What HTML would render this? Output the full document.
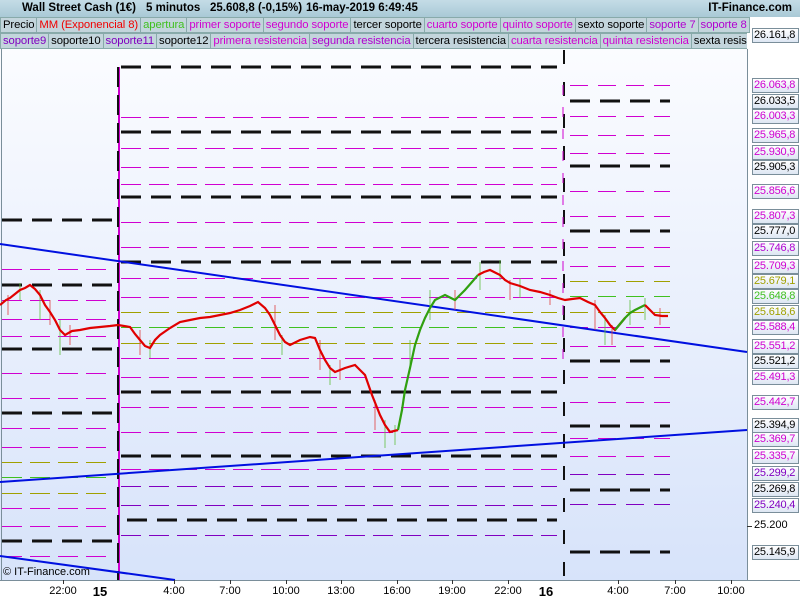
<!DOCTYPE html>
<html><head><meta charset="utf-8"><style>
body{margin:0;width:800px;height:600px;overflow:hidden;background:#fff;font-family:"Liberation Sans",sans-serif;position:relative}
#hdr{position:absolute;left:0;top:0;width:800px;height:17px;background:linear-gradient(#c4dce6,#a9c9d6);font-size:11.5px;font-weight:bold;line-height:17px}
#hdr span{position:absolute;white-space:nowrap}
.row{position:absolute;left:0;height:16px;white-space:nowrap;font-size:11.3px;line-height:14px;letter-spacing:-0.1px}
.row span{display:inline-block;background:#c3d5dc;border:1px solid #8aa;padding:0 2px;margin-right:-1px;height:14px}
.lab{position:absolute;left:752px;width:44px;height:13px;border:1px solid #7a8e9a;background:linear-gradient(#fff,#dde6f3);font-size:11px;line-height:13px;text-align:left;padding-left:1px;letter-spacing:-0.2px}
.t{position:absolute;top:585px;font-size:11px;transform:translateX(-50%)}
</style></head><body>
<svg width="800" height="600" style="position:absolute;left:0;top:0" shape-rendering="crispEdges">
<defs><linearGradient id="g" x1="0" y1="0" x2="0" y2="1"><stop offset="0" stop-color="#fbfcff"/><stop offset="1" stop-color="#d7e3fa"/></linearGradient></defs>
<rect x="0" y="49" width="747" height="531" fill="url(#g)"/>
<line x1="747.5" y1="49" x2="747.5" y2="580" stroke="#7a8e9a"/>
<line x1="0" y1="580.5" x2="800" y2="580.5" stroke="#7a8e9a"/>
<line x1="1.5" y1="49" x2="1.5" y2="580" stroke="#7a8e9a"/>
<g stroke-width="1" fill="none">
<g stroke="#d000d0" stroke-dasharray="20,8">
<path d="M2 269.5H112M2 300.5H112M2 319.5H112M2 336.5H112M2 373.5H112M2 398.5H112M2 428.5H112M2 447.5H112M2 508.5H112M2 526.5H112M2 556.5H112"/></g>
<g stroke="#a0a000" stroke-dasharray="20,8"><path d="M2 462.5H112M2 493.5H112"/></g>
<g stroke="#40c020" stroke-dasharray="20,8"><path d="M2 477.5H112"/></g>
<g stroke="#111" stroke-width="3" stroke-dasharray="20,10"><path d="M2 220H112M2 285H112M2 349H112M2 413H112M2 541H112"/></g>
<g stroke="#d000d0" stroke-dasharray="20,8"><path d="M121 117.5H557M121 148.5H557M121 167.5H557M121 184.5H557M121 222.5H557M121 247.5H557M121 278.5H557M121 297.5H557M121 358.5H557M121 377.5H557M121 407.5H557M121 432.5H557M121 469.5H557"/></g>
<g stroke="#8000c0" stroke-dasharray="20,8"><path d="M121 486.5H557M121 505.5H557M121 535.5H557"/></g>
<g stroke="#a0a000" stroke-dasharray="20,8"><path d="M121 312.5H557M121 343.5H557"/></g>
<g stroke="#40c020" stroke-dasharray="20,8"><path d="M121 327.5H557"/></g>
<g stroke="#111" stroke-width="3" stroke-dasharray="20,10"><path d="M121 67H557M121 132H557M121 197H557M121 262H557M121 392H557M121 456H557M127 520H557"/></g>
<g stroke="#d000d0" stroke-dasharray="18,10"><path d="M570 85.5H670M570 116.5H670M570 135.5H670M570 153.5H670M570 191.5H670M570 216.5H670M570 247.5H670M570 266.5H670M570 327.5H670M570 346.5H670M570 377.5H670M570 402.5H670M570 438.5H670M570 456.5H670"/></g>
<g stroke="#8000c0" stroke-dasharray="18,10"><path d="M570 474.5H670M570 504.5H670"/></g>
<g stroke="#a0a000" stroke-dasharray="18,10"><path d="M570 281.5H670M570 312.5H670"/></g>
<g stroke="#40c020" stroke-dasharray="18,10"><path d="M570 296.5H670"/></g>
<g stroke="#111" stroke-width="3" stroke-dasharray="20,10"><path d="M570 101H670M570 166H670M570 231H670M570 361H670M570 426H670M570 490H670M570 552H670"/></g>
<line x1="119" y1="67" x2="119" y2="580" stroke="#d000d0" stroke-width="2"/>
<line x1="118" y1="67" x2="118" y2="580" stroke="#111" stroke-width="2" stroke-dasharray="20,8"/>
<line x1="564" y1="50" x2="564" y2="578" stroke="#111" stroke-width="2" stroke-dasharray="14,18"/>
<line x1="563" y1="85" x2="563" y2="360" stroke="#d000d0" stroke-width="1" stroke-dasharray="10,12"/>
</g>
<g shape-rendering="auto">
<g stroke="#0010e0" stroke-width="2"><line x1="0" y1="244" x2="747" y2="352"/><line x1="0" y1="482" x2="747" y2="430"/><line x1="0" y1="556" x2="175" y2="580"/></g>
<g stroke="#60c040" stroke-width="1" opacity="0.8"><path d="M20 283V300M40 290V320M60 320V355M150 340V358M282 335V355M330 365V385M385 420V448M395 425V445M410 340V370M430 290V320M480 262V290M500 260V280M605 315V345M630 300V325M645 298V320M520 278V298"/></g>
<g stroke="#e04040" stroke-width="1" opacity="0.8"><path d="M8 295V315M50 300V325M70 325V345M140 330V355M275 305V340M320 340V370M340 360V380M375 400V430M455 290V310M510 280V300M550 290V305M595 300V330M612 325V345M660 308V325"/></g>
<polyline fill="none" stroke="#e00000" stroke-width="2.2" points="0,305 6,300 10,298 15,294 20,290 25,288 30,285 35,289 40,295 45,305 50,312 55,320 60,330 65,335 72,331 80,330 90,328 100,327 110,326 118,325 130,327 135,334 140,340 145,346 150,348 155,340 160,335 170,328 180,322 190,320 200,318 210,317 220,315 230,313 240,310 250,306 258,302 265,308 270,315 275,325 280,335 285,342 290,345 300,340 310,337 315,338 320,350 325,360 330,368 335,372 345,368 355,365 360,370 365,375 372,395 376,405 380,415 385,425 390,432 398,430"/>
<polyline fill="none" stroke="#30a010" stroke-width="2.2" points="398,430 402,410 405,390 410,368 415,345 420,330 425,318 430,308 435,300 445,295 455,300 460,295 465,290 472,282 478,275"/>
<polyline fill="none" stroke="#e00000" stroke-width="2.2" points="478,275 484,272 490,270 500,275 505,280 510,283 520,286 530,290 540,292 550,295 558,298 565,300 572,299 580,298 588,302 595,305 600,312 605,318 610,325 615,330 620,324 625,318"/>
<polyline fill="none" stroke="#30a010" stroke-width="2.2" points="615,330 620,324 625,318 630,313 635,310 645,305"/>
<polyline fill="none" stroke="#e00000" stroke-width="2.2" points="645,305 650,310 655,315 662,316 668,316"/>
</g>
<g stroke="#333"><path d="M63.5 580V584M174.5 580V584M230.5 580V584M286.5 580V584M341.5 580V584M397.5 580V584M452.5 580V584M508.5 580V584M618.5 580V584M675.5 580V584M731.5 580V584M747 526.5H752"/></g>
<rect x="4" y="8" width="5" height="7" fill="#e04040" stroke="#600" stroke-width="0.5"/><rect x="11" y="3" width="5" height="10" fill="#40d040" stroke="#060" stroke-width="0.5"/>
</svg>
<div id="hdr"><span style="left:22px">Wall Street Cash (1€)</span><span style="left:146px">5 minutos</span><span style="left:210px">25.608,8 (-0,15%)</span><span style="left:306px">16-may-2019 6:49:45</span><span style="right:8px">IT-Finance.com</span></div>
<div class="row" style="top:17px"><span>Precio</span><span style="color:#f00000">MM (Exponencial 8)</span><span style="color:#40c020">apertura</span><span style="color:#d000d0">primer soporte</span><span style="color:#d000d0">segundo soporte</span><span>tercer soporte</span><span style="color:#d000d0">cuarto soporte</span><span style="color:#d000d0">quinto soporte</span><span>sexto soporte</span><span style="color:#b000d0">soporte 7</span><span style="color:#b000d0">soporte 8</span></div>
<div class="row" style="top:33px;width:747px;overflow:hidden"><span style="color:#8000c0">soporte9</span><span>soporte10</span><span style="color:#8000c0">soporte11</span><span>soporte12</span><span style="color:#d000d0">primera resistencia</span><span style="color:#b000d0">segunda resistencia</span><span>tercera resistencia</span><span style="color:#d000d0">cuarta resistencia</span><span style="color:#d000d0">quinta resistencia</span><span>sexta resistencia</span></div>
<div class="lab" style="top:28px">26.161,8</div>
<div class="lab" style="top:78px;color:#d000d0">26.063,8</div>
<div class="lab" style="top:94px">26.033,5</div>
<div class="lab" style="top:109px;color:#d000d0">26.003,3</div>
<div class="lab" style="top:128px;color:#d000d0">25.965,8</div>
<div class="lab" style="top:145px;color:#d000d0">25.930,9</div>
<div class="lab" style="top:160px">25.905,3</div>
<div class="lab" style="top:184px;color:#d000d0">25.856,6</div>
<div class="lab" style="top:209px;color:#d000d0">25.807,3</div>
<div class="lab" style="top:224px">25.777,0</div>
<div class="lab" style="top:241px;color:#b000d0">25.746,8</div>
<div class="lab" style="top:259px;color:#d000d0">25.709,3</div>
<div class="lab" style="top:274px;color:#a0a000">25.679,1</div>
<div class="lab" style="top:289px;color:#40c020">25.648,8</div>
<div class="lab" style="top:305px;color:#a0a000">25.618,6</div>
<div class="lab" style="top:320px;color:#d000d0">25.588,4</div>
<div class="lab" style="top:339px;color:#d000d0">25.551,2</div>
<div class="lab" style="top:354px">25.521,2</div>
<div class="lab" style="top:370px;color:#d000d0">25.491,3</div>
<div class="lab" style="top:395px;color:#d000d0">25.442,7</div>
<div class="lab" style="top:418px">25.394,9</div>
<div class="lab" style="top:432px;color:#d000d0">25.369,7</div>
<div class="lab" style="top:449px;color:#d000d0">25.335,7</div>
<div class="lab" style="top:466px;color:#8000c0">25.299,2</div>
<div class="lab" style="top:482px">25.269,8</div>
<div class="lab" style="top:498px;color:#8000c0">25.240,4</div>
<div style="position:absolute;left:754px;top:519px;font-size:11px">25.200</div>
<div class="lab" style="top:545px">25.145,9</div>
<div style="position:absolute;left:3px;top:566px;font-size:11px">© IT-Finance.com</div>
<div class="t" style="left:63px">22:00</div><div class="t" style="left:100px;font-weight:bold;font-size:13px;top:584px">15</div>
<div class="t" style="left:174px">4:00</div><div class="t" style="left:230px">7:00</div><div class="t" style="left:286px">10:00</div><div class="t" style="left:341px">13:00</div><div class="t" style="left:397px">16:00</div><div class="t" style="left:452px">19:00</div><div class="t" style="left:508px">22:00</div><div class="t" style="left:546px;font-weight:bold;font-size:13px;top:584px">16</div><div class="t" style="left:618px">4:00</div><div class="t" style="left:675px">7:00</div><div class="t" style="left:731px">10:00</div>
</body></html>
